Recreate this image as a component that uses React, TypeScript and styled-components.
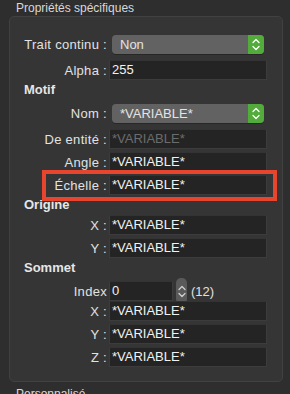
import React from "react";
import styled, { createGlobalStyle } from "styled-components";

const GlobalStyle = createGlobalStyle`
  html, body {
    margin: 0;
    padding: 0;
    background: #2e2e2e;
  }
  body {
    font-family: "Liberation Sans", Arial, sans-serif;
    -webkit-font-smoothing: antialiased;
  }
`;

interface IField {
  label: string;
  value: string;
  disabled?: boolean;
  highlighted?: boolean;
}

const motifFields: IField[] = [
  { label: "De entité :", value: "*VARIABLE*", disabled: true },
  { label: "Angle :", value: "*VARIABLE*" },
  { label: "Échelle :", value: "*VARIABLE*", highlighted: true },
];

const origineFields: IField[] = [
  { label: "X :", value: "*VARIABLE*" },
  { label: "Y :", value: "*VARIABLE*" },
];

const sommetFields: IField[] = [
  { label: "X :", value: "*VARIABLE*" },
  { label: "Y :", value: "*VARIABLE*" },
  { label: "Z :", value: "*VARIABLE*" },
];

const UpDownArrows: React.FC<{ color?: string }> = ({ color = "#ffffff" }) => (
  <svg width="8" height="13" viewBox="0 0 8 13" fill="none">
    <path d="M1 4.5 L4 1.5 L7 4.5" stroke={color} strokeWidth="1.3" strokeLinecap="round" strokeLinejoin="round" />
    <path d="M1 8.5 L4 11.5 L7 8.5" stroke={color} strokeWidth="1.3" strokeLinecap="round" strokeLinejoin="round" />
  </svg>
);

const FieldRow: React.FC<IField> = ({ label, value, disabled, highlighted }) => (
  <Row highlighted={highlighted}>
    <Label>{label}</Label>
    <TextField disabled={disabled}>{value}</TextField>
  </Row>
);

const PopupField: React.FC<{ label: string; value: string }> = ({ label, value }) => (
  <PopupRow>
    <Label>{label}</Label>
    <Popup>
      <PopupValue>{value}</PopupValue>
      <PopupArrows>
        <UpDownArrows />
      </PopupArrows>
    </Popup>
  </PopupRow>
);

const App: React.FC = () => {
  return (
    <Page>
      <GlobalStyle />
      <SectionTitle>Propriétés spécifiques</SectionTitle>
      <GroupBox>
        <PopupField label="Trait continu :" value="Non" />
        <FieldRow label="Alpha :" value="255" />

        <Heading>Motif</Heading>
        <PopupField label="Nom :" value="*VARIABLE*" />
        {motifFields.map((f) => (
          <FieldRow key={f.label} {...f} />
        ))}

        <Heading>Origine</Heading>
        {origineFields.map((f) => (
          <FieldRow key={"o" + f.label} {...f} />
        ))}

        <Heading>Sommet</Heading>
        <IndexRow>
          <Label>Index</Label>
          <IndexControls>
            <IndexField>0</IndexField>
            <Stepper>
              <UpDownArrows color="#d0d0d0" />
            </Stepper>
            <Count>(12)</Count>
          </IndexControls>
        </IndexRow>
        {sommetFields.map((f) => (
          <FieldRow key={"s" + f.label} {...f} />
        ))}
      </GroupBox>
      <SectionTitle $spaced>Personnalisé</SectionTitle>
    </Page>
  );
};

export default App;

const Page = styled.div`
  width: 290px;
  height: 394px;
  overflow: hidden;
  background: #2e2e2e;
  color: #dedede;
`;

const SectionTitle = styled.div<{ $spaced?: boolean }>`
  height: 16px;
  line-height: 16px;
  padding-left: 16px;
  margin-top: ${(p) => (p.$spaced ? "4px" : "0")};
  font-size: 12px;
  color: #d8d8d8;
`;

const GroupBox = styled.div`
  margin: 0 7px 0 9px;
  padding: 14px 15px 14px 0;
  background: #353535;
  border: 1px solid #414141;
  border-radius: 5px;
  display: flex;
  flex-direction: column;
  gap: 3px;
`;

const Row = styled.div<{ highlighted?: boolean }>`
  position: relative;
  display: grid;
  grid-template-columns: 97px 1fr;
  column-gap: 2px;
  align-items: center;
  height: 20px;

  ${(p) =>
    p.highlighted &&
    `
    &::after {
      content: "";
      position: absolute;
      left: 32px;
      right: -10px;
      top: -5px;
      bottom: -6px;
      border: 4px solid #e8452e;
      pointer-events: none;
    }
  `}
`;

const PopupRow = styled(Row)`
  height: 26px;
`;

const IndexRow = styled(Row)``;

const Label = styled.div`
  text-align: right;
  font-size: 13px;
  letter-spacing: 0.3px;
  color: #e2e2e2;
  white-space: nowrap;
`;

const TextField = styled.div<{ disabled?: boolean }>`
  box-sizing: border-box;
  height: 20px;
  line-height: 18px;
  padding-left: 2px;
  background: #242424;
  border: 1px solid #3c3c3c;
  border-top-color: #333333;
  font-size: 13px;
  color: ${(p) => (p.disabled ? "#6c6c6c" : "#f2f2f2")};
  white-space: nowrap;
  overflow: hidden;
`;

const Popup = styled.div`
  display: flex;
  height: 19px;
  margin: 0 3px;
  border-radius: 4px;
  background: #626262;
  overflow: hidden;
  box-shadow: 0 1px 0 rgba(0, 0, 0, 0.25);
`;

const PopupValue = styled.div`
  flex: 1;
  padding-left: 8px;
  line-height: 19px;
  font-size: 13px;
  color: #e4e4e4;
`;

const PopupArrows = styled.div`
  width: 16px;
  display: flex;
  align-items: center;
  justify-content: center;
  background: #52ab3a;
`;

const IndexControls = styled.div`
  display: flex;
  align-items: center;
`;

const IndexField = styled(TextField)`
  width: 64px;
`;

const Stepper = styled.div`
  width: 11px;
  height: 26px;
  margin-left: 3px;
  border-radius: 5px;
  background: #5a5a5a;
  display: flex;
  align-items: center;
  justify-content: center;
`;

const Count = styled.div`
  margin-left: 4px;
  font-size: 13px;
  color: #e0e0e0;
`;

const Heading = styled.div`
  height: 14px;
  line-height: 14px;
  padding-left: 14px;
  font-size: 13px;
  font-weight: 700;
  color: #e6e6e6;
`;
